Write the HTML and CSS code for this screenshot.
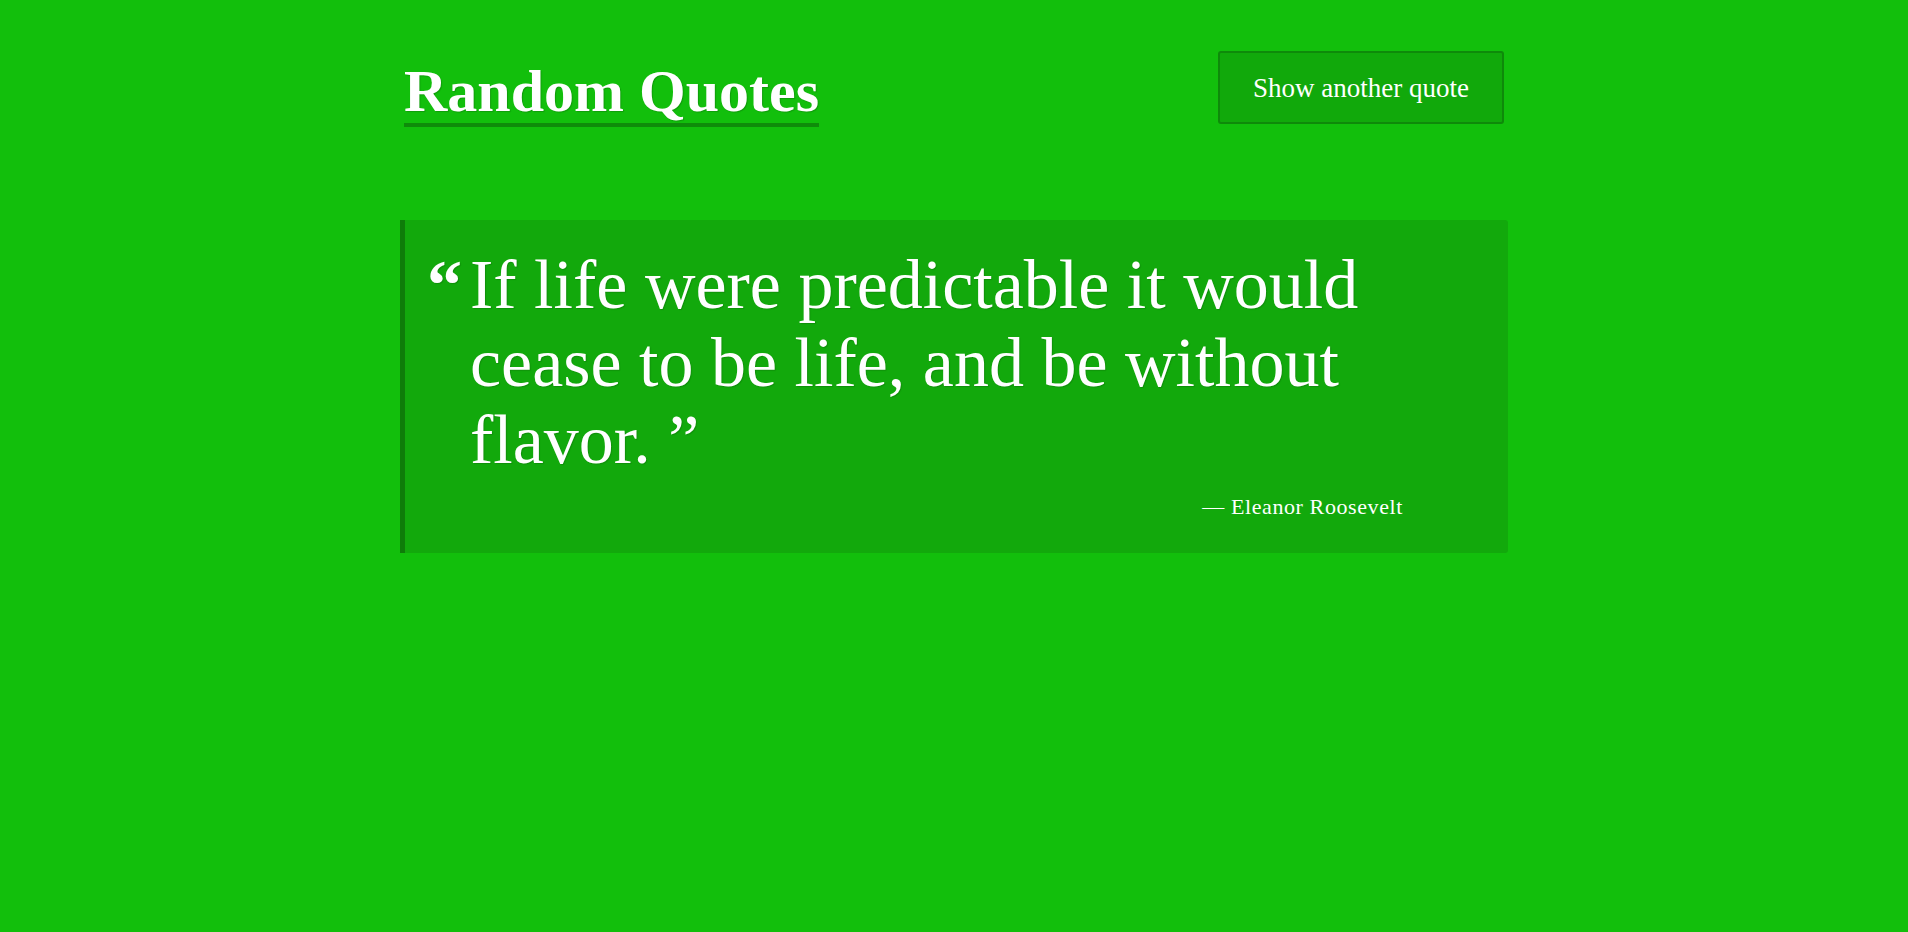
FILE: index.html
```html
<!DOCTYPE html>
<html lang="en">
<head>
<meta charset="utf-8">
<title>Random Quotes</title>
<link rel="stylesheet" href="styles.css">
</head>
<body>
  <div class="page">
    <header class="header">
      <h1 class="title">Random Quotes</h1>
      <button class="btn" type="button">Show another quote</button>
    </header>
    <section class="quote-card">
      <span class="mark">“</span>
      <div class="quote-body">
        <p class="quote-text">If life were predictable it would cease to be life, and be without flavor. ”</p>
        <p class="author">— Eleanor Roosevelt</p>
      </div>
    </section>
  </div>
</body>
</html>
```

FILE: styles.css
```css
html, body {
  margin: 0;
  padding: 0;
}
body {
  background: #12bf0c;
  color: #ffffff;
  font-family: "Liberation Serif", "Times New Roman", serif;
  min-height: 932px;
}
.page {
  width: 1108px;
  margin: 0 auto;
}
.header {
  display: flex;
  justify-content: space-between;
  align-items: flex-start;
  padding: 51px 4px 0 4px;
}
.title {
  margin: 10px 0 0 0;
  font-size: 60px;
  font-weight: 700;
  line-height: 60px;
  padding-bottom: 2px;
  border-bottom: 4px solid #0e8c0a;
  text-shadow: 1px 1px 1px rgba(0, 0, 0, 0.18);
}
.btn {
  font-family: "Liberation Serif", "Times New Roman", serif;
  font-size: 27px;
  line-height: 31px;
  color: #ffffff;
  background: #11a90b;
  border: 2px solid #0e8a0a;
  border-radius: 3px;
  padding: 20px 33px 18px 33px;
  white-space: nowrap;
  cursor: pointer;
}
.quote-card {
  margin-top: 93px;
  display: flex;
  align-items: flex-start;
  background: #12a90c;
  border-left: 5px solid #0e7d09;
  border-radius: 0 3px 3px 0;
  padding: 26px 105px 33px 22px;
}
.mark {
  flex: 0 0 43px;
  font-size: 70px;
  font-weight: 700;
  line-height: 77.5px;
  text-shadow: 1px 1px 1px rgba(0, 0, 0, 0.15);
}
.quote-body {
  flex: 1;
}
.quote-text {
  margin: 0;
  font-size: 70px;
  line-height: 77.5px;
  text-shadow: 1px 1px 1px rgba(0, 0, 0, 0.15);
}
.author {
  margin: 15px 0 0 0;
  text-align: right;
  font-size: 22px;
  line-height: 26px;
  letter-spacing: 0.6px;
}
```
